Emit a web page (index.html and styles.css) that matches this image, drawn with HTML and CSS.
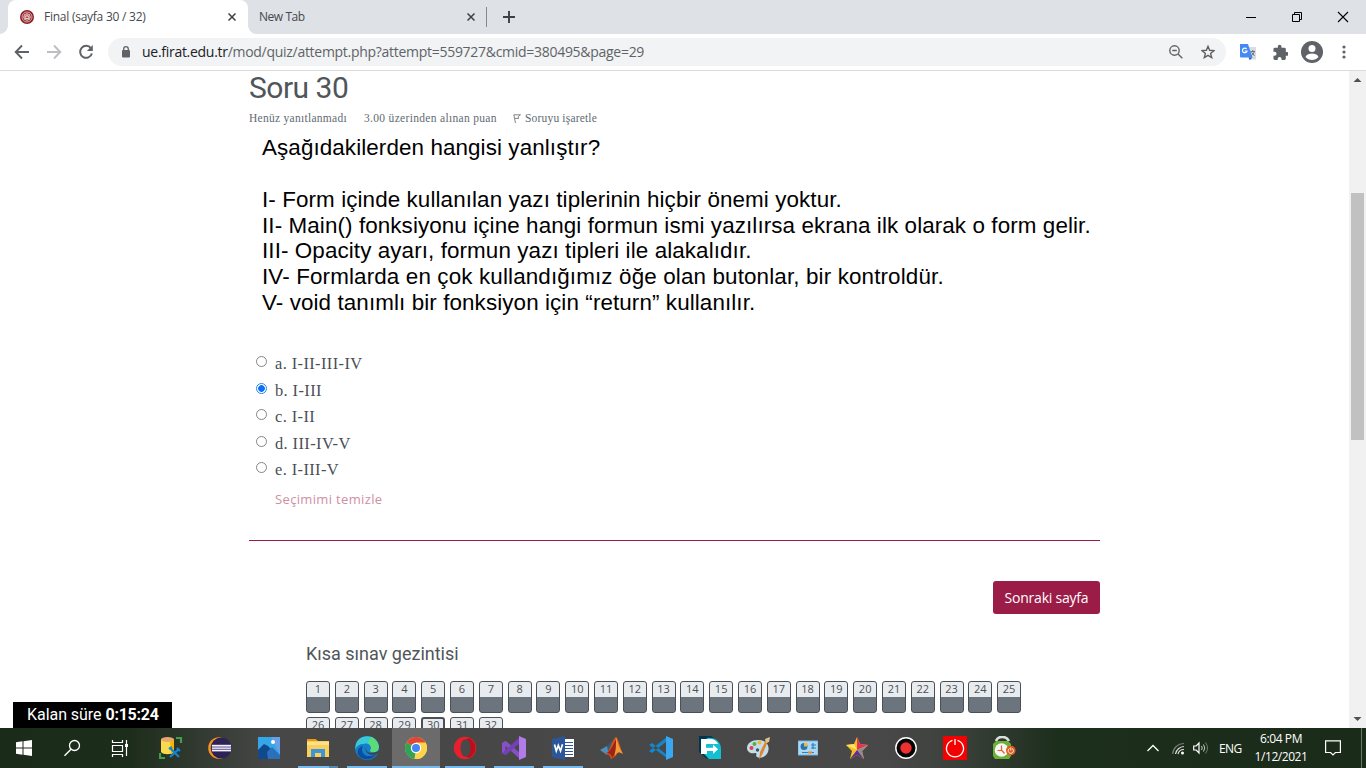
FILE: index.html
```html
<!DOCTYPE html>
<html lang="tr">
<head>
<meta charset="utf-8">
<title>Final (sayfa 30 / 32)</title>
<link rel="stylesheet" href="styles.css">
</head>
<body>
<header class="tabstrip">
  <div class="tab active">
    <svg class="favicon" width="14" height="14" viewBox="0 0 14 14"><circle cx="7" cy="7" r="7" fill="#8c1f25"/><circle cx="7" cy="7" r="5" fill="none" stroke="#e9c9c9" stroke-width=".8"/><circle cx="7" cy="7" r="3.3" fill="#b3484c" stroke="#fff" stroke-width=".7"/><path d="M5.2 6h3.6v2.5H5.2zM7 4.6v1.6" fill="none" stroke="#fff" stroke-width=".7"/></svg>
    <span class="tabtitle">Final (sayfa 30 / 32)</span>
    <svg class="tabclose" width="8" height="8" viewBox="0 0 8 8"><path d="M.5.5l7 7M7.500.5l-7 7" stroke="#3c4043" stroke-width="1.500"/></svg>
  </div>
  <div class="tab idle">
    <span class="tabtitle newtab">New Tab</span>
    <svg class="tabclose" width="8" height="8" viewBox="0 0 8 8"><path d="M.5.5l7 7M7.500.5l-7 7" stroke="#3c4043" stroke-width="1.500"/></svg>
  </div>
  <svg class="plus" width="12" height="12" viewBox="0 0 12 12"><path d="M6 0v12M0 6h12" stroke="#3c4043" stroke-width="1.900"/></svg>
  <div class="winbtns">
    <svg width="46" height="28" viewBox="0 0 46 28"><path d="M18 14.500h10" stroke="#000"/></svg>
    <svg width="46" height="28" viewBox="0 0 46 28"><path d="M18.500 11.500h7v7h-7zM20.500 11.500v-2h7v7h-2" fill="none" stroke="#000"/></svg>
    <svg width="46" height="28" viewBox="0 0 46 28"><path d="M18 9l10 10M28 9L18 19" stroke="#000" stroke-width="1.100"/></svg>
  </div>
</header>
<div class="toolbar">
  <svg class="navicon" width="16" height="16" viewBox="0 0 16 16"><path d="M15 8H2M8 1.500L1.700 8 8 14.500" fill="none" stroke="#5f6368" stroke-width="1.900"/></svg>
  <svg class="navicon" width="16" height="16" viewBox="0 0 16 16"><path d="M1 8h13M8 1.500L14.300 8 8 14.500" fill="none" stroke="#bcbec1" stroke-width="1.900"/></svg>
  <svg class="navicon" width="16" height="16" viewBox="0 0 16 16"><path d="M13 4.300A6 6 0 1 0 13.900 9.500" fill="none" stroke="#5f6368" stroke-width="2"/><path d="M14.800 1v6H8.800z" fill="#5f6368"/></svg>
  <div class="omnibox">
    <svg class="lock" width="10" height="12" viewBox="0 0 10 12"><rect x="1" y="4" width="8" height="7.500" rx="1" fill="#5f6368"/><path d="M2.700 4.500V3a2.300 2.300 0 0 1 4.600 0v1.500" fill="none" stroke="#5f6368" stroke-width="1.300"/></svg>
    <span class="url"><b>ue.firat.edu.tr</b>/mod/quiz/attempt.php?attempt=559727&amp;cmid=380495&amp;page=29</span>
    <svg class="mag" width="14" height="14" viewBox="0 0 14 14"><circle cx="5.500" cy="5.500" r="4.700" fill="none" stroke="#5f6368" stroke-width="1.400"/><path d="M3.200 5.500h4.600M9 9l4.300 4.300" stroke="#5f6368" stroke-width="1.400"/></svg>
    <svg width="14" height="14" viewBox="0 0 14 14"><path d="M7 1.300l1.600 4 4.400.3-3.400 2.800 1.100 4.200L7 10.300l-3.700 2.300 1.100-4.200L1 5.600l4.400-.3z" fill="none" stroke="#5f6368" stroke-width="1.400"/></svg>
  </div>
  <svg class="translate" width="17" height="17" viewBox="0 0 17 17"><path d="M8 3h8v12.500H9z" fill="#dadce0"/><path d="M0 0h8l4.500 13.500H1a1 1 0 0 1-1-1z" fill="#4489f4"/><path d="M8.500 13.500h4L9.800 16z" fill="#3154c5"/><path d="M6.600 5A2.300 2.300 0 1 0 7 7H4.700" fill="none" stroke="#fff" stroke-width="1.200"/><path d="M10.500 7.500H15M12.800 6v1.500M14.300 7.500c-.3 2-1.700 3.300-3 4.300M11.500 8.300l3 3.500" stroke="#697580" fill="none"/></svg>
  <svg class="puzzle" width="16" height="16" viewBox="0 0 22 22"><path d="M20.500 11H19V7a2 2 0 0 0-2-2h-4V3.500a2.500 2.500 0 0 0-5 0V5H4a2 2 0 0 0-2 2v3.800h1.500a2.700 2.700 0 0 1 0 5.400H2V20a2 2 0 0 0 2 2h3.800v-1.500a2.700 2.700 0 0 1 5.400 0V22H17a2 2 0 0 0 2-2v-4h1.500a2.500 2.500 0 0 0 0-5z" fill="#5f6368"/></svg>
  <svg class="avatar" width="22" height="22" viewBox="0 0 22 22"><circle cx="11" cy="11" r="11" fill="#5f6368"/><circle cx="11" cy="7.500" r="3.500" fill="#fff"/><path d="M4.500 16c1-2.600 4-3.500 6.500-3.500s5.500.9 6.500 3.500c-1.600 2-4 3-6.500 3s-4.900-1-6.500-3z" fill="#fff"/></svg>
  <svg class="dots" width="4" height="14" viewBox="0 0 4 14"><g fill="#5f6368"><circle cx="2" cy="2" r="1.600"/><circle cx="2" cy="7" r="1.600"/><circle cx="2" cy="12" r="1.600"/></g></svg>
</div>
<div class="viewport">
  <main class="page">
    <section class="question">
      <h1 class="qno">Soru 30</h1>
      <div class="info">
        <span class="state">Henüz yanıtlanmadı</span>
        <span class="grade">3.00 üzerinden alınan puan</span>
        <svg class="flag" width="8" height="9" viewBox="0 0 8 9"><path d="M.8.800H7.500L5.200 2.600 5.500 4.500 2 4.300M.8.800L2.500 9" fill="none" stroke="#777" stroke-width=".9"/></svg>
        <span class="mark">Soruyu işaretle</span>
      </div>
      <div class="qtext">
        <p>Aşağıdakilerden hangisi yanlıştır?</p>
        <br>
        <p>I- Form içinde kullanılan yazı tiplerinin hiçbir önemi yoktur.</p>
        <p>II- Main() fonksiyonu içine hangi formun ismi yazılırsa ekrana ilk olarak o form gelir.</p>
        <p>III- Opacity ayarı, formun yazı tipleri ile alakalıdır.</p>
        <p class="wide">IV- Formlarda en çok kullandığımız öğe olan butonlar, bir kontroldür.</p>
        <p>V- void tanımlı bir fonksiyon için “return” kullanılır.</p>
      </div>
      <div class="answers">
        <label class="answer"><i class="radio"></i><span>a. I-II-III-IV</span></label>
        <label class="answer"><i class="radio on"></i><span>b. I-III</span></label>
        <label class="answer"><i class="radio"></i><span>c. I-II</span></label>
        <label class="answer"><i class="radio"></i><span>d. III-IV-V</span></label>
        <label class="answer"><i class="radio"></i><span>e. I-III-V</span></label>
      </div>
      <a class="clear">Seçimimi temizle</a>
    </section>
    <div class="submit"><button class="next">Sonraki sayfa</button></div>
    <section class="quiznav">
      <h2 class="navtitle">Kısa sınav gezintisi</h2>
      <div class="cells">
        <a>1</a><a>2</a><a>3</a><a>4</a><a>5</a><a>6</a><a>7</a><a>8</a><a>9</a><a>10</a><a>11</a><a>12</a><a>13</a><a>14</a><a>15</a><a>16</a><a>17</a><a>18</a><a>19</a><a>20</a><a>21</a><a>22</a><a>23</a><a>24</a><a>25</a><a>26</a><a>27</a><a>28</a><a>29</a><a class="current">30</a><a>31</a><a>32</a>
      </div>
    </section>
  </main>
  <div class="scrollbar">
    <svg width="17" height="17" viewBox="0 0 17 17"><path d="M4.500 11L8.500 7l4 4z" fill="#505050"/></svg>
    <div class="thumb"></div>
    <svg class="down" width="17" height="17" viewBox="0 0 17 17"><path d="M4.500 6l4 4 4-4z" fill="#505050"/></svg>
  </div>
  <div class="timer"><span>Kalan süre</span> <b>0:15:24</b></div>
</div>
<footer class="taskbar">
  <div class="sys"><svg width="16" height="16" viewBox="0 0 16 16"><path d="M0 2.200L6.500 1.300V7.500H0zM7.500 1.200L16 0v7.500H7.500zM0 8.500h6.500v6.200L0 13.800zM7.500 8.500H16V16l-8.500-1.200z" fill="#fff"/></svg></div>
  <div class="sys"><svg width="18" height="18" viewBox="0 0 18 18"><circle cx="11.500" cy="6.500" r="5" fill="none" stroke="#fff" stroke-width="1.300"/><path d="M8 10.200L1.500 16.700" stroke="#fff" stroke-width="1.400"/></svg></div>
  <div class="sys"><svg width="18" height="18" viewBox="0 0 18 18"><path d="M1.500 1v2.500h10V1M1.500 6.500h10v6h-10zM1.500 18v-2.500h10V18M15.500 1v16" fill="none" stroke="#fff" stroke-width="1.200"/><path d="M14 5h3v3h-3z" fill="#fff"/></svg></div>
  <div class="apps">
    <div class="app"><svg width="24" height="24" viewBox="0 0 24 24"><path d="M2 3v13c2 3 11 3 13 0V3z" fill="#f9d94e"/><path d="M11 4h4v12l-3 2z" fill="#f2b900"/><ellipse cx="8.500" cy="3.500" rx="6.500" ry="2.500" fill="#e8a66c"/><path d="M17 2h5v5M1 17v5h5" fill="none" stroke="#3fa04b" stroke-width="2.200"/><path d="M11 12l9 9M11 21l9-8M10 13l3-2M18 12l3 3" stroke="#1685d0" stroke-width="2.200" fill="none"/></svg></div>
    <div class="app"><svg width="24" height="24" viewBox="0 0 24 24"><circle cx="11" cy="12" r="10.800" fill="#f7941e"/><circle cx="13.200" cy="12" r="10.500" fill="#2c2255"/><path d="M4 8.800h19v6.600H4z" fill="#f4f2fa"/><path d="M3 11h21M3 13.300h21" stroke="#4a3c85" stroke-width=".9"/></svg></div>
    <div class="app"><svg width="22" height="22" viewBox="0 0 22 22"><path fill="#35a7e8" d="M0 0h22v22H0z"/><path d="M13 0h9v18z" fill="#7e9bea" opacity=".7"/><path d="M0 13l6-6 4 2 12 13H0z" fill="#104a8c"/><path d="M9 15l5-5 8 8v4H10z" fill="#2a70bb"/><circle cx="15" cy="5" r="2" fill="#fff"/></svg></div>
    <div class="app open multi"><svg width="22" height="20" viewBox="0 0 22 20"><path d="M0 2h9l2 1h11v16H0z" fill="#f9cf58"/><path d="M0 1h9l1 2H0z" fill="#e49b14"/><path d="M0 4h22v3H0z" fill="#ffe08a"/><path d="M4 19v-8h14v8h-4v-4H8v4z" fill="#3d93dc"/></svg></div>
    <div class="app open"><svg width="24" height="24" viewBox="0 0 24 24"><circle cx="12" cy="12" r="12" fill="#147fcb"/><path d="M1 8C4-2 21-3 24 10c.5 6-5 7-9 5 3-5-2-9-7-7-4 0-6 2-8 5z" fill="#3bc9d8"/><path d="M16 .700C22 3 26 11 22 15c-3 2-6 1-7 0 2-3 1-6-2-8z" fill="#5bdc78"/><path d="M8 10c-3 5 1 11 7 10 4 0 5-2 7-3-3 6-12 9-18 3-3-4-1-9 4-10z" fill="#0b4e9f"/><path d="M12 9.500c-2 2-1 6 2 7 3 1 7 0 10-2l-1 3c-4 2-9 2-11-1-2-2-2-5 0-7z" fill="#454545"/></svg></div>
    <div class="app open focus"><svg width="22" height="22" viewBox="0 0 22 22"><circle cx="11" cy="11" r="11" fill="#ffd34a"/><path d="M11 11L1.500 5.500a11 11 0 0 1 19 0z" fill="#df4637"/><path d="M1.500 5.500A11 11 0 0 0 9.500 22L15 13.500z" fill="#2fa457"/><path d="M11 11V5.500h9.500A11 11 0 0 1 9.500 22z" fill="#ffd34a"/><circle cx="11" cy="11" r="5.200" fill="#fff"/><circle cx="11" cy="11" r="4" fill="#4387f3"/></svg></div>
    <div class="app open"><svg width="24" height="24" viewBox="0 0 24 24"><circle cx="12" cy="12" r="11.200" fill="#e8202e"/><path d="M16 2a11 11 0 0 1 0 20l-5-3V5z" fill="#b9111c"/><ellipse cx="12.500" cy="12" rx="5" ry="8.800" fill="#494949"/></svg></div>
    <div class="app open"><svg width="24" height="24" viewBox="0 0 24 24"><path d="M0 7l3.500-2v14L0 17z" fill="#8b50c7"/><path d="M0 7l4-2 14 12v6z" fill="#8551c4"/><path d="M0 17L18 1v6L4 19z" fill="#7440b5"/><path d="M17 0l7 3v18l-7 3z" fill="#b17be8"/></svg></div>
    <div class="app open"><svg width="24" height="24" viewBox="0 0 24 24"><path d="M12 3h11v18H12z" fill="#fff"/><path d="M14 6.500h8M14 9.500h8M14 12.500h8M14 15.500h8M14 18.500h8" stroke="#2b579a" stroke-width="1.100"/><path d="M1 3l13-3v24L1 21z" fill="#2b579a"/><path d="M3.500 8.500L5.300 15l2-5.500L9.500 15l2-6.800" fill="none" stroke="#fff" stroke-width="1.700"/></svg></div>
    <div class="app"><svg width="24" height="22" viewBox="0 0 24 22"><path d="M0 13l7-4 4 4-4 5z" fill="#4c91bd"/><path d="M7 9l5-5 2 6-5 9z" fill="#345d7c"/><path d="M5 16c5 0 7-14 11-16 3 2 4 11 7 17-3-2-4-2-6 0-2 3-4 4-6 5-1-4-3-5-6-6z" fill="#d9521f"/><path d="M16 0c2 6 3 10 7 17-5-3-6-2-8 2-1-7 0-14 1-19z" fill="#f39b38"/><path d="M16 2c-3 6-5 11-9 14 3 0 5 3 5 5 4-4 4-10 4-19z" fill="#9b2515"/></svg></div>
    <div class="app"><svg width="24" height="24" viewBox="0 0 24 24"><path d="M0 9l3-2 15 12v3zM0 15l3 2L18 5V1z" fill="#1287cd"/><path d="M17 0l7 3v18l-7 3z" fill="#39a8f0"/></svg></div>
    <div class="app"><svg width="24" height="24" viewBox="0 0 24 24"><path d="M1 0h12l6 5-10 18L1 16z" fill="#00364d"/><path d="M9 2c8-1 14 4 14 11v10H11L3 15z" fill="#12bfd3"/><path d="M3 3h9c4 0 7 2 8 5H9v3h6V8.500l5 4.700-5 4.700v-3H9v3H3z" fill="#fff"/><path d="M8 8.200h7v3.600H8z" fill="#12bfd3"/></svg></div>
    <div class="app"><svg width="24" height="24" viewBox="0 0 24 24"><path d="M11 4c9 0 12 6 10 12-2 5-8 7-11 5-2-1 1-4-2-4-4 1-8-1-8-5 0-5 5-8 11-8z" fill="#c3ddec"/><circle cx="4.500" cy="12" r="2" fill="#df463c"/><circle cx="7.500" cy="8" r="2" fill="#58ad48"/><circle cx="12.500" cy="6.500" r="2" fill="#efba2b"/><circle cx="10.500" cy="14" r="1.700" fill="#365669"/><path d="M21 5l-5 12-4 7 1-8 6-12z" fill="#dd882c"/><path d="M18 3l5-2-1 5-3 1z" fill="#eac18b"/></svg></div>
    <div class="app"><svg width="20" height="16" viewBox="0 0 20 16"><path d="M0 1h20v14H0z" fill="#abd9f3" stroke="#78b5df"/><circle cx="6" cy="6.500" r="3.500" fill="#2b72ad"/><path d="M6 6.500V3h3.500v3.500z" fill="#ecb54a"/><path d="M13 5h5M13 8h5M15 3v6" stroke="#287ec2" stroke-width="1.200"/><path d="M4 12.500h12" stroke="#2784c7"/><path d="M10 12.500h4" stroke="#ed8b2c" stroke-width="2"/></svg></div>
    <div class="app"><svg width="22" height="22" viewBox="0 0 22 22"><path d="M11 0l3 7 8 1-6 6 2 8-7-4-7 4 2-8-6-6 8-1z" fill="#f9bd23"/><path d="M11 13V0l3 7 8 1z" fill="#df335e"/><path d="M11 13l11-5-6 6 2 8z" fill="#8e8d92"/><path d="M11 13l7 9-7-4-7 4z" fill="#573290"/><path d="M11 13L0 8l8-1z" fill="#ffe260"/></svg></div>
    <div class="app"><svg width="22" height="22" viewBox="0 0 22 22"><circle cx="11" cy="11" r="10.200" fill="#050505" stroke="#fff" stroke-width="1.400"/><circle cx="11" cy="11" r="5.700" fill="#ee3030"/></svg></div>
    <div class="app"><svg width="24" height="24" viewBox="0 0 24 24"><path fill="#f50000" d="M0 0h24v24H0z"/><path d="M9.500 4.300a8.500 8.500 0 1 0 5 0M12 3v6" fill="none" stroke="#fff" stroke-width="1.300"/></svg></div>
    <div class="app"><svg width="24" height="24" viewBox="0 0 24 24"><path d="M4 5C6-.5 14-.5 17 5" fill="none" stroke="#ddd" stroke-width="2.600"/><path d="M1 8l3-3h12l3 3v12l-2 3H3l-2-3z" fill="#6bb135"/><circle cx="9.500" cy="14" r="6.800" fill="#f5f8f2"/><path d="M9.500 9.500v5H5.500M9.500 14l3 3.500" stroke="#e75e32" stroke-width="1.200" fill="none"/><circle cx="18.800" cy="14.500" r="4.800" fill="#df5b20"/><path d="M17.500 12.500a2.600 2.600 0 1 0 2.600 0M18.800 11.500v3" fill="none" stroke="#fff" stroke-width=".9"/></svg></div>
  </div>
  <div class="tray">
    <svg class="chev" width="12" height="8" viewBox="0 0 12 8"><path d="M.5 7L6 1.500 11.500 7" fill="none" stroke="#fff" stroke-width="1.300"/></svg>
    <svg class="wifi" width="13" height="13" viewBox="0 0 13 13"><g fill="none" stroke-width="1.200"><path d="M.7 12A11 11 0 0 1 12 1.500" stroke="#718172"/><path d="M3.500 12A9 9 0 0 1 12 4.500M6 12a6 6 0 0 1 6-4.500" stroke="#ddd"/></g><circle cx="10.500" cy="11" r="1.500" fill="#fff"/></svg>
    <svg class="vol" width="17" height="14" viewBox="0 0 17 14"><path d="M.7 5h2.500L6 2v10L3.200 9H.7z" fill="none" stroke="#fff" stroke-width="1.200"/><path d="M8.500 5q1.500 2 0 4M10.500 3.500q2.500 3.500 0 7" fill="none" stroke="#ccc"/><path d="M12.500 1.500q4 5.500 0 11" fill="none" stroke="#6f7d70"/></svg>
    <span class="lang">ENG</span>
    <div class="clock"><span>6:04 PM</span><span class="date">1/12/2021</span></div>
    <svg class="note" width="16" height="16" viewBox="0 0 16 16"><path d="M.6.800h14.800v11.700h-5L8 15l-2.400-2.500h-5z" fill="none" stroke="#fff" stroke-width="1.200"/></svg>
    <i class="desk"></i>
  </div>
</footer>
</body>
</html>
```
FILE: styles.css
```css
* { box-sizing: border-box; }
body { margin: 0; width: 1366px; height: 768px; overflow: hidden; display: flex; flex-direction: column; background: #fff; font-family: "Open Sans", sans-serif; }
svg { display: block; flex: none; }
h1, h2, p { margin: 0; font-weight: 400; }
span, a, p, h1, h2, button { white-space: nowrap; }

.tabstrip { height: 34px; background: #dee1e6; display: flex; align-items: center; padding-left: 8px; flex: none; }
.tab { height: 34px; display: flex; align-items: center; font-size: 12px; color: #45494d; }
.tab.active { width: 240px; background: #fff; border-radius: 8px 8px 0 0; padding: 0 12px; position: relative; }
.tab.active::before, .tab.active::after { content: ""; position: absolute; bottom: 0; width: 8px; height: 8px; }
.tab.active::before { left: -8px; background: radial-gradient(circle at 0 0, #dee1e6 7.5px, #fff 8px); }
.tab.active::after { right: -8px; background: radial-gradient(circle at 100% 0, #dee1e6 7.5px, #fff 8px); }
.tab.idle { width: 239px; height: 20px; padding: 0 11px; border-right: 1px solid #85898e; }
.tabtitle { margin-left: 10px; letter-spacing: -.25px; line-height: 16px; margin-top: -1px; }
.newtab { margin-left: 0; letter-spacing: -.45px; }
.tabclose { margin-left: auto; }
.plus { margin-left: 16px; }
.winbtns { margin-left: auto; display: flex; }

.toolbar { height: 37px; border-bottom: 1px solid #d9dbde; display: flex; align-items: center; padding: 0 0 0 14px; flex: none; }
.navicon { margin-right: 16px; }
.omnibox { width: 1118px; height: 28px; margin-left: -2px; background: #f1f3f4; border-radius: 14px; display: flex; align-items: center; padding: 0 11px 0 13px; }
.url { margin: -1px 0 0 11px; font-size: 14px; letter-spacing: -.285px; color: #5f6368; }
.url b { font-weight: 400; color: #202124; }
.mag { margin-left: auto; margin-right: 18px; }
.translate { margin-left: 14px; }
.puzzle { margin-left: 15px; }
.avatar { margin-left: 13px; }
.dots { margin-left: 19px; }

.viewport { height: 657px; display: flex; flex: none; position: relative; overflow: hidden; }
.page { flex: 1; padding-left: 249px; }
.question { width: 851px; height: 470px; border-bottom: 1px solid #9b1c46; }
.qno { font: 400 30px/34px Roboto, sans-serif; letter-spacing: -.5px; color: #50555a; }
.info { height: 18px; margin-top: 4px; display: flex; align-items: center; font: 11.5px/18px "Liberation Serif", serif; color: #626a72; }
.state { width: 98px; letter-spacing: .28px; }
.grade { margin-left: 17px; width: 132px; letter-spacing: .32px; }
.flag { margin-left: 17px; margin-right: 4px; }
.mark { letter-spacing: .18px; }
.qtext { padding: 8px 0 0 13px; font: 22.4px/25.85px "Liberation Sans", Arial, sans-serif; letter-spacing: .1px; color: #000; }
.wide { letter-spacing: .14px; }
.answers { margin-top: 35px; padding-left: 7px; }
.answer { height: 26.6px; display: flex; align-items: flex-start; font: 16.4px/26px "Liberation Serif", serif; letter-spacing: .4px; color: #495057; }
.radio { width: 11px; height: 11px; margin: 5px 8px 0 0; border: 1px solid #858585; border-radius: 50%; flex: none; }
.radio.on { border-color: #2b83f6; background: radial-gradient(circle, #0a73f5 3px, #fff 3.7px); }
.clear { display: block; margin: 4px 0 0 26px; font-size: 13px; line-height: 22px; letter-spacing: .35px; color: #cf8fa3; }
.submit { width: 851px; margin-top: 40px; display: flex; justify-content: flex-end; }
.next { width: 107px; height: 33px; border: 0; border-radius: 3px; padding: 0; background: #9b1c46; color: #fff; font: 14px/33px "Open Sans", sans-serif; letter-spacing: -.22px; }
.quiznav { margin: 27px 0 0 57px; width: 730px; }
.navtitle { font: 400 18px/26px Roboto, sans-serif; color: #50555a; }
.cells { margin-top: 14px; display: grid; grid-template-columns: repeat(25, 24px); column-gap: 4.8px; row-gap: 4px; }
.cells a { height: 32px; border: 1px solid #495057; border-radius: 3px; background: linear-gradient(#e9ecef 15px, #6c757d 15px); font-size: 11px; line-height: 14px; text-align: center; color: #495057; }
.cells .current { border-width: 2px; line-height: 12px; }
.scrollbar { width: 17px; background: #f1f1f1; display: flex; flex-direction: column; }
.thumb { width: 13px; height: 247px; margin: 105px auto 0 2px; background: #c1c1c1; }
.down { margin-top: auto; }
.timer { position: absolute; left: 13px; bottom: 0; width: 159px; height: 26px; padding-left: 14px; background: #000; color: #fff; font: 16px/25px Roboto, sans-serif; white-space: nowrap; }
.timer span { letter-spacing: -.05px; }
.timer b { letter-spacing: -.25px; }

.taskbar { height: 40px; display: flex; background: linear-gradient(90deg, #1b2b1a 0, #1d2d1b 130px, #474747 270px, #484848 880px, #3f433f 940px, #1c2e1c 1060px, #1b2b1a 100%); flex: none; }
.sys { width: 48px; display: flex; align-items: center; justify-content: center; }
.apps { display: flex; margin-left: 2px; }
.app { width: 49px; height: 40px; display: flex; align-items: center; justify-content: center; position: relative; }
.app.open::after { content: ""; position: absolute; left: 5px; bottom: 0; width: 40px; height: 2px; background: #76b9ed; }
.app.multi::after { background: linear-gradient(90deg, #76b9ed 31px, #5687ad 31px); }
.app.focus { background: linear-gradient(90deg, transparent 1px, #6a6b6a 1px); }
.app.focus::after { left: 1px; width: 48px; }
.tray { margin-left: auto; display: flex; align-items: center; color: #fff; font-size: 12px; }
.wifi { margin-left: 13px; }
.vol { margin-left: 8px; }
.lang { margin-left: 9px; width: 25px; letter-spacing: -.6px; }
.clock { width: 54px; margin-left: 10px; display: flex; flex-direction: column; align-items: center; line-height: 18px; letter-spacing: -.4px; }
.date { letter-spacing: -.45px; }
.note { margin-left: 17px; }
.desk { width: 1px; height: 40px; margin: 0 4px 0 20px; background: #6a756a; }
```
